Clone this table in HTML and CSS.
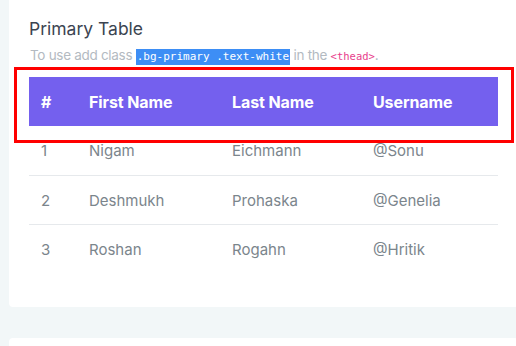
FILE: index.html
```html
<!DOCTYPE html>
<html>
<head>
<meta charset="utf-8">
<link rel="stylesheet" href="styles.css">
</head>
<body>
<div class="page">
  <div class="card">
    <h4 class="card-title">Primary Table</h4>
    <p class="card-sub">To use add class <span class="sel">.bg-primary .text-white</span> in the <code class="tag">&lt;thead&gt;</code>.</p>
    <div class="table-wrap">
      <table class="tbl">
        <colgroup>
          <col class="c1"><col class="c2"><col class="c3"><col class="c4">
        </colgroup>
        <thead>
          <tr><th>#</th><th>First Name</th><th>Last Name</th><th>Username</th></tr>
        </thead>
        <tbody>
          <tr><td>1</td><td>Nigam</td><td>Eichmann</td><td>@Sonu</td></tr>
          <tr><td>2</td><td>Deshmukh</td><td>Prohaska</td><td>@Genelia</td></tr>
          <tr><td>3</td><td>Roshan</td><td>Rogahn</td><td>@Hritik</td></tr>
        </tbody>
      </table>
      <div class="mark"></div>
    </div>
  </div>
  <div class="card card-next"></div>
</div>
</body>
</html>
```
FILE: styles.css
```css
html, body {
  margin: 0;
  padding: 0;
  background: #f2f7f8;
  overflow: hidden;
  height: 346px;
}
.page {
  padding-left: 9px;
  display: flex;
  flex-direction: column;
  gap: 31px;
}
.card {
  background: #fff;
  width: 469px;
  padding: 18px 20px 34px 20px;
  border-radius: 0 0 4px 4px;
  font-family: Inter, "Noto Sans", sans-serif;
}
.card-next {
  width: 509px;
  height: 40px;
  padding: 0;
  border-radius: 4px;
}
.card-title {
  margin: 0;
  font-size: 17.5px;
  line-height: 22px;
  font-weight: 400;
  color: #3b4451;
}
.card-sub {
  margin: 7px 0 0 1px;
  font-size: 13.5px;
  line-height: 16px;
  color: #b3bac1;
  letter-spacing: -0.3px;
  white-space: nowrap;
}
.sel {
  background: #3d8ef5;
  color: #fff;
  font-family: "DejaVu Sans Mono", "Liberation Mono", monospace;
  font-size: 11px;
  letter-spacing: 0;
  padding: 0 1px;
  display: inline-block;
  line-height: 16px;
}
.tag {
  color: #e83e8c;
  font-family: "DejaVu Sans Mono", "Liberation Mono", monospace;
  font-size: 10.5px;
  letter-spacing: 0;
}
.table-wrap {
  position: relative;
  margin-top: 12px;
}
.tbl {
  width: 469px;
  border-collapse: collapse;
  table-layout: fixed;
}
.c1 { width: 48px; }
.c2 { width: 143px; }
.c3 { width: 141px; }
.c4 { width: 137px; }
.tbl th {
  background: #7460ee;
  color: #fff;
  font-weight: 700;
  font-size: 16px;
  text-align: left;
  height: 49px;
  padding: 0 0 0 12px;
  letter-spacing: -0.1px;
}
.tbl td {
  height: 49px;
  padding: 0 0 0 12px;
  font-size: 15px;
  color: #7b858c;
  font-weight: 400;
}
.tbl tbody tr + tr td {
  height: 48px;
  border-top: 1px solid #e6e9ec;
}
.mark {
  position: absolute;
  left: -15px;
  top: -10px;
  width: 494px;
  height: 70px;
  border: 3px solid #ff0000;
}
```
